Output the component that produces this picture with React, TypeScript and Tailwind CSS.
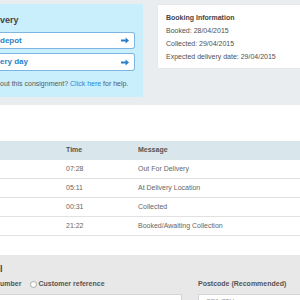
import React from "react";

const Arrow = () => (
  <svg width="8" height="7" viewBox="0 0 8 7" className="text-[#2a7fc8]">
    <path d="M0 2.6h4.6V0.6L8 3.5 4.6 6.4V4.4H0z" fill="currentColor" />
  </svg>
);

const rows = [
  { time: "07:28", msg: "Out For Delivery" },
  { time: "05:11", msg: "At Delivery Location" },
  { time: "00:31", msg: "Collected" },
  { time: "21:22", msg: "Booked/Awaiting Collection" },
];

export default function App() {
  return (
    <div className="w-[300px] h-[300px] overflow-hidden bg-white font-['Liberation_Sans',Arial,sans-serif] text-[7px] text-[#555]">
      {/* top area */}
      <div className="bg-[#e9edf0] h-[105px] pt-[4px] flex items-start">
        <div className="w-[143px] h-[93px] shrink-0 bg-[#c9eefc] pr-[8px] flex flex-col">
          <div className="mt-[11px] h-[10px] leading-[10px] text-[9px] font-bold text-[#454545]">very</div>
          <button className="mt-[7px] h-[17px] bg-white border border-[#7db5e3] rounded-r-[3px] border-l-0 flex items-center justify-between pr-[5px] text-[8px] font-bold text-[#2a7fc8]">
            <span>depot</span>
            <Arrow />
          </button>
          <button className="mt-[4px] h-[18px] bg-white border border-[#7db5e3] rounded-r-[3px] border-l-0 flex items-center justify-between pr-[5px] text-[8px] font-bold text-[#2a7fc8]">
            <span>ery day</span>
            <Arrow />
          </button>
          <p className="mt-[9px] leading-[8px] whitespace-nowrap text-[#5a5a5a]">
            out this consignment? <span className="text-[#2b86d6]">Click here</span> for help.
          </p>
        </div>
        <div className="ml-[15px] mt-[1px] h-[63px] flex-1 bg-white shadow-[0_0_1px_rgba(0,0,0,0.12)] pl-[8px] pt-[6px] leading-[13px] whitespace-nowrap text-[#505050]">
          <div className="font-bold text-[#444]">Booking Information</div>
          <div>Booked: 28/04/2015</div>
          <div>Collected: 29/04/2015</div>
          <div>Expected delivery date: 29/04/2015</div>
        </div>
      </div>

      {/* tracking table */}
      <div className="h-[36px]" />
      <div className="h-[19px] bg-[#d9e6ec] flex items-center font-bold text-[#555]">
        <div className="w-[66px]" />
        <div className="w-[72px]">Time</div>
        <div>Message</div>
      </div>
      {rows.map((r) => (
        <div key={r.time} className="h-[19px] border-b border-[#e2e2e2] flex items-center text-[#666]">
          <div className="w-[66px]" />
          <div className="w-[72px]">{r.time}</div>
          <div>{r.msg}</div>
        </div>
      ))}
      <div className="h-[19px]" />

      {/* search */}
      <div className="bg-[#e8e8e8] h-[60px]">
        <div className="pt-[9px] h-[19px] leading-[10px] text-[9px] font-bold text-[#444]">l</div>
        <div className="mt-[5px] flex">
          <div className="w-[182px] flex items-center h-[10px] font-bold text-[#555]">
            <span>umber</span>
            <span className="ml-[9px] w-[7px] h-[7px] rounded-full bg-white border border-[#aaa]" />
            <span className="ml-[1px]">Customer reference</span>
          </div>
          <div className="ml-[16px] h-[10px] flex items-center font-bold text-[#555]">Postcode (Recommended)</div>
        </div>
        <div className="mt-[5px] flex">
          <div className="w-[182px] h-[20px] bg-white border border-[#d4d4d4] border-l-0" />
          <div className="ml-[16px] flex-1 h-[20px] bg-white border border-[#d4d4d4] border-r-0 pl-[7px] pt-[2px] text-[#999]">SE1 7TH</div>
        </div>
      </div>
    </div>
  );
}
